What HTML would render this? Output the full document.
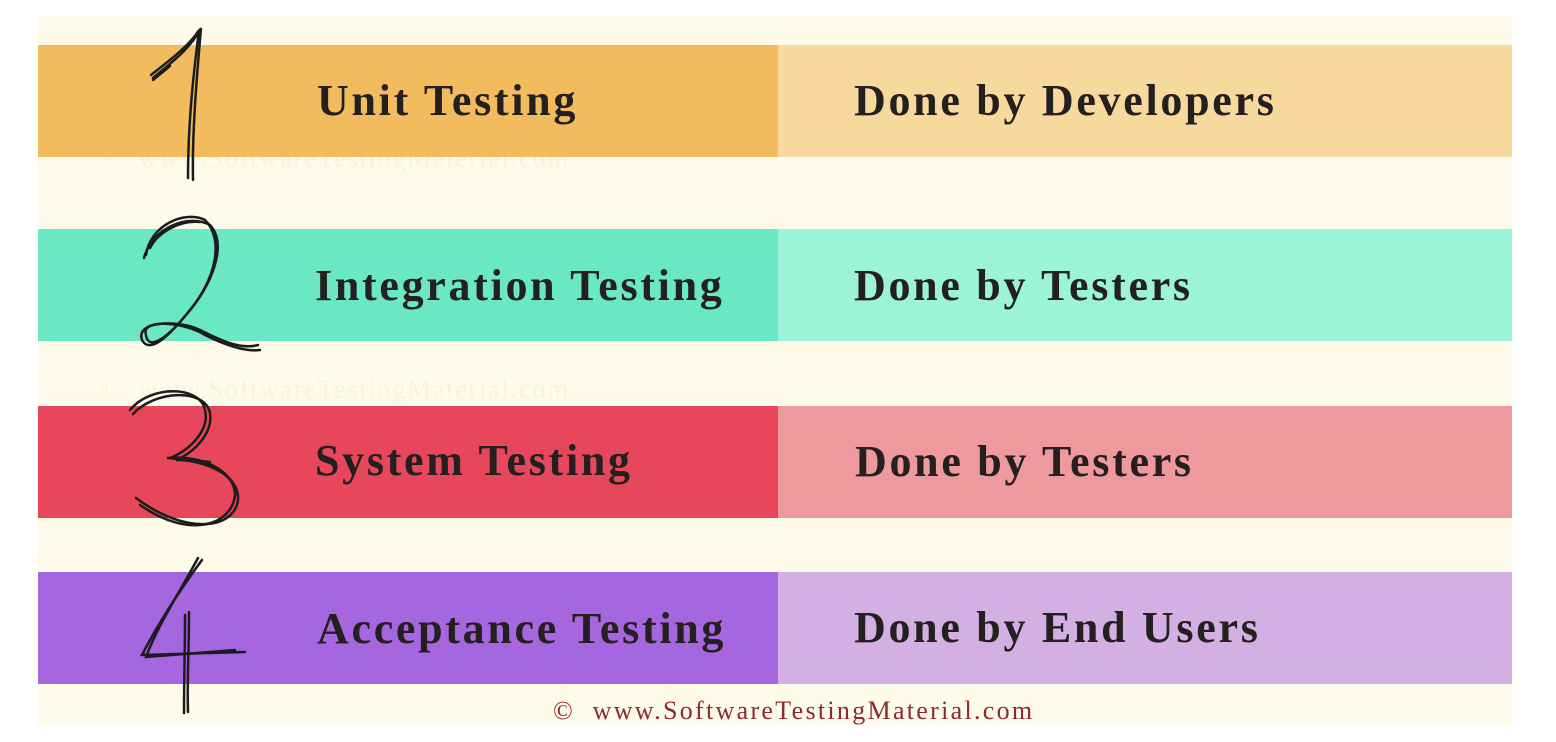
<!DOCTYPE html>
<html><head><meta charset="utf-8"><style>
html,body{margin:0;padding:0;background:#fff;}
body{width:1556px;height:742px;position:relative;overflow:hidden;font-family:"Liberation Serif",serif;}
.cream{position:absolute;left:38px;top:16px;width:1474px;height:709px;background:#fefbea;}
.bar{position:absolute;height:112px;}
.t{position:absolute;font-size:44px;font-weight:bold;color:#242020;line-height:1;white-space:nowrap;letter-spacing:2.7px;}
.wm{position:absolute;left:100px;font-size:27px;color:rgba(200,190,160,0.12);white-space:nowrap;letter-spacing:1.5px;}
svg{position:absolute;left:0;top:0;}
</style></head><body>
<div class="cream"></div>
<div class="bar" style="left:38px;top:45px;width:740px;background:#f2bb5e"></div>
<div class="bar" style="left:778px;top:45px;width:734px;background:#f7d99d"></div>
<div class="bar" style="left:38px;top:229px;width:740px;background:#6ae8c4"></div>
<div class="bar" style="left:778px;top:229px;width:734px;background:#9cf4d8"></div>
<div class="bar" style="left:38px;top:406px;width:740px;background:#e7465b"></div>
<div class="bar" style="left:778px;top:406px;width:734px;background:#ee999e"></div>
<div class="bar" style="left:38px;top:572px;width:740px;background:#a566e0"></div>
<div class="bar" style="left:778px;top:572px;width:734px;background:#d4afe3"></div>
<div class="wm" style="top:143px">©&nbsp; www.SoftwareTestingMaterial.com</div>
<div class="wm" style="top:374px">©&nbsp; www.SoftwareTestingMaterial.com</div>
<div class="t" style="left:317px;top:79px">Unit Testing</div>
<div class="t" style="left:854px;top:79px">Done by Developers</div>
<div class="t" style="left:315px;top:264px">Integration Testing</div>
<div class="t" style="left:854px;top:264px">Done by Testers</div>
<div class="t" style="left:315px;top:439px">System Testing</div>
<div class="t" style="left:855px;top:440px">Done by Testers</div>
<div class="t" style="left:317px;top:607px">Acceptance Testing</div>
<div class="t" style="left:854px;top:606px">Done by End Users</div>
<div style="position:absolute;left:553px;top:696px;font-size:26px;color:#8b2b2b;white-space:nowrap;letter-spacing:2.3px">©&nbsp; www.SoftwareTestingMaterial.com</div>
<svg width="1556" height="742" fill="none" stroke="#1c1c1c" stroke-width="2.5" stroke-linecap="round">
<path d="M151 75 C170 60 190 45 199 30 C194 70 188 120 188 178"/>
<path d="M153 78 C172 62 191 48 201 28 C197 75 192 130 193 180"/>
<path d="M153 80 L170 66"/>
<path d="M146 255 C150 225 185 210 205 220 C225 240 215 280 190 310 C170 335 150 355 142 340 C135 320 180 320 200 330 C220 340 240 350 258 345"/>
<path d="M144 258 C152 228 188 213 210 225 C228 245 212 285 186 315 C168 337 148 352 146 335 C140 318 185 322 205 335 C225 345 245 352 260 350"/>
<path d="M150 248 C158 232 180 220 200 222"/>
<path d="M130 410 C150 385 200 385 205 410 C210 430 190 450 170 458 C200 455 235 470 235 495 C232 525 190 540 140 505"/>
<path d="M133 414 C155 390 205 388 210 413 C213 433 195 452 176 460 C205 460 240 475 238 500 C234 530 185 535 136 498"/>
<path d="M168 458 L210 462"/>
<path d="M202 560 C180 590 160 620 142 655 L245 652"/>
<path d="M198 558 C178 595 158 625 146 657 L235 650"/>
<path d="M185 615 C185 650 184 680 184 713"/>
<path d="M189 612 C189 650 187 680 188 712"/>
</svg>
</body></html>
